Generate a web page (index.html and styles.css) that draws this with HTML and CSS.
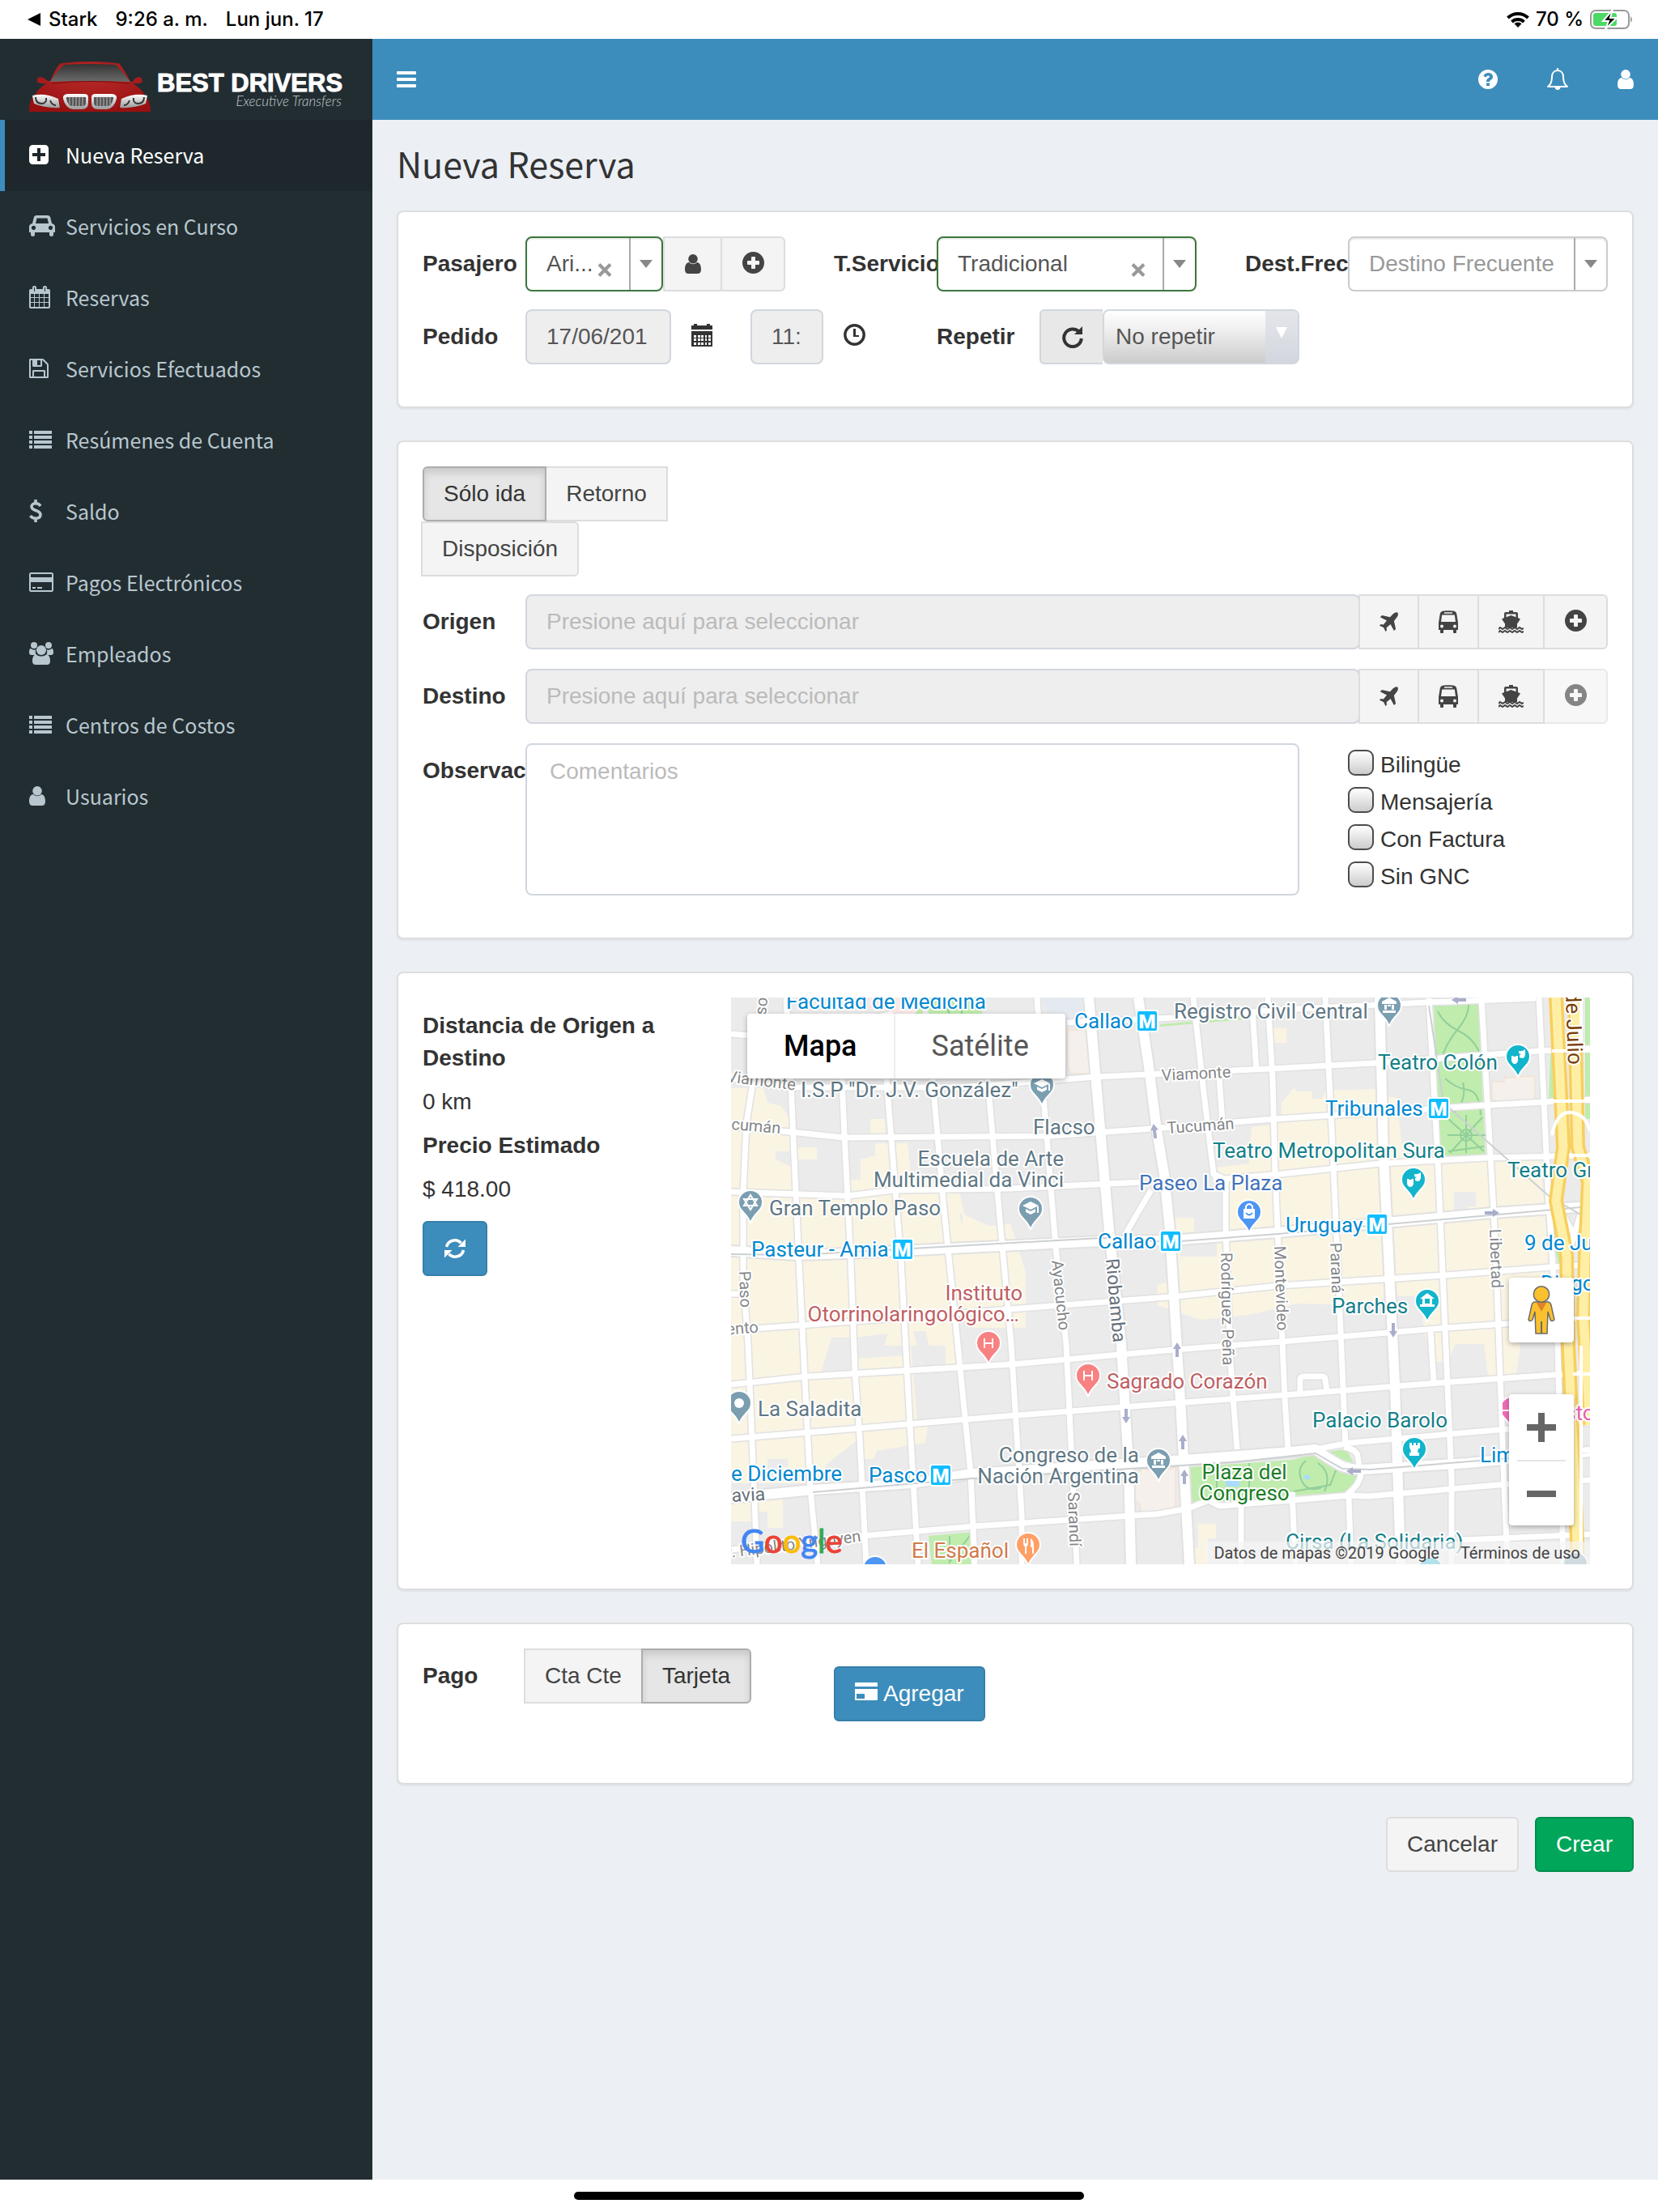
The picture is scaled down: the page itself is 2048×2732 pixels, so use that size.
FILE: index.html
```html
<!DOCTYPE html>
<html lang="es">
<head>
<meta charset="utf-8">
<meta name="viewport" content="width=device-width, initial-scale=1">
<title>Nueva Reserva | Best Drivers</title>
<link rel="stylesheet" href="styles.css">
</head>
<body>
<svg class="sprite" aria-hidden="true">
  <symbol id="i-user" viewBox="0 0 20 24"><circle cx="10" cy="5.8" r="5.8"/><path d="M5 10C1.500 10.500 0 14 0 19c0 3 1.700 5 4.200 5h11.600c2.500 0 4.200-2 4.200-5 0-5-1.500-8.500-5-9-2.800 3-7.200 3-10 0z"/></symbol>
  <symbol id="i-plus-square" viewBox="0 0 24 24"><path fill-rule="evenodd" d="M4.500 0h15A4.500 4.500 0 0 1 24 4.500v15a4.500 4.500 0 0 1-4.500 4.500h-15A4.500 4.500 0 0 1 0 19.500v-15A4.500 4.500 0 0 1 4.500 0zM10 4v6H4v4h6v6h4v-6h6v-4h-6V4z"/></symbol>
  <symbol id="i-car" viewBox="0 0 32 26"><path fill-rule="evenodd" d="M9 0h14c1.600 0 2.800 1 3.200 2.500L28 10c2.500.3 4 2 4 4.500V21h-2v2.500a2.500 2.500 0 0 1-5 0V21H7v2.500a2.500 2.500 0 0 1-5 0V21H0v-6.500C0 12 1.500 10.300 4 10l1.800-7.500C6.200 1 7.400 0 9 0zm.5 3.500L8 10h16l-1.500-6.500zM5.500 12.700a2.600 2.600 0 1 0 0 5.200 2.600 2.600 0 0 0 0-5.200zm21 0a2.600 2.600 0 1 0 0 5.200 2.600 2.600 0 0 0 0-5.200z"/></symbol>
  <symbol id="i-calendar" viewBox="0 0 26 28"><path fill-rule="evenodd" d="M2 4h2V2a2 2 0 0 1 2-2h1a2 2 0 0 1 2 2v2h8V2a2 2 0 0 1 2-2h1a2 2 0 0 1 2 2v2h2a2 2 0 0 1 2 2v20a2 2 0 0 1-2 2H2a2 2 0 0 1-2-2V6a2 2 0 0 1 2-2zM6 2v5h1V2zm13 0v5h1V2zM2 10v4h4v-4zm5 0v4h5v-4zm6 0v4h5v-4zm6 0v4h5v-4zM2 15v5h4v-5zm5 0v5h5v-5zm6 0v5h5v-5zm6 0v5h5v-5zM2 21v5h4v-5zm5 0v5h5v-5zm6 0v5h5v-5zm6 0v5h5v-5z"/></symbol>
  <symbol id="i-save" viewBox="0 0 24 24"><path fill-rule="evenodd" d="M1.500 0H16c1 0 1.800.3 2.500 1L23 5.500c.7.700 1 1.500 1 2.500v14.500c0 .9-.6 1.500-1.500 1.500h-21C.6 24 0 23.400 0 22.500v-21C0 .6.6 0 1.500 0zM2 2v20h2v-6.500c0-.9.600-1.500 1.500-1.500h13c.9 0 1.500.6 1.500 1.500V22h2V8c0-.5-.2-.8-.5-1.100L17 2.400c-.3-.3-.6-.4-1-.4v6.500c0 .9-.6 1.500-1.500 1.500h-9C4.600 10 4 9.400 4 8.500V2zm8 0v6h4V2zM6 16v6h12v-6z"/></symbol>
  <symbol id="i-list" viewBox="0 0 28 22"><path d="M0 0h4v4H0zM6 0h22v4H6zM0 6h4v4H0zM6 6h22v4H6zM0 12h4v4H0zM6 12h22v4H6zM0 18h4v4H0zM6 18h22v4H6z"/></symbol>
  <symbol id="i-dollar" viewBox="0 0 16 28"><path fill="none" stroke="currentColor" stroke-width="3.600" d="M14 8C12.500 5.500 10.500 4.800 8 4.800c-3 0-5 1.500-5 4 0 6 11 3.500 11 10 0 2.700-2.300 4.400-6 4.400-3 0-5-1-6.500-3.200M8 0v5M8 23v5"/></symbol>
  <symbol id="i-card" viewBox="0 0 30 24"><path fill-rule="evenodd" d="M2.500 0h25A2.500 2.500 0 0 1 30 2.500v19a2.500 2.500 0 0 1-2.500 2.500h-25A2.500 2.500 0 0 1 0 21.500v-19A2.500 2.500 0 0 1 2.500 0zM2 2v4h26V2zm0 10v10h26V12zm2 6h4v2H4zm6 0h6v2h-6z"/></symbol>
  <symbol id="i-users" viewBox="0 0 30 28"><circle cx="6" cy="4" r="4"/><circle cx="24" cy="4" r="4"/><circle cx="15" cy="10" r="6"/><path d="M2 8c2.500 2 5 2 6.500 1C7 12 8 14 9 16H3c-2 0-3-1-3-3 0-3 .6-5 2-5zM28 8c-2.500 2-5 2-6.500 1 1.500 3 .5 5-.5 7h6c2 0 3-1 3-3 0-3-.6-5-2-5zM9 15.500c3 2.800 9 2.800 12 0 3.500 0 5 3.500 5 8 0 3-1.500 4.500-4.200 4.500H8.200C5.500 28 4 26.500 4 23.500c0-4.500 1.500-8 5-8z"/></symbol>
  <symbol id="i-plus-circle" viewBox="0 0 27 27"><path fill-rule="evenodd" d="M13.500 0a13.500 13.500 0 1 0 0 27 13.500 13.500 0 1 0 0-27zM12 6h3q1 0 1 1v4h4q1 0 1 1v3q0 1-1 1h-4v4q0 1-1 1h-3q-1 0-1-1v-4H7q-1 0-1-1v-3q0-1 1-1h4V7q0-1 1-1z"/></symbol>
  <symbol id="i-calendar-solid" viewBox="0 0 26 28"><path fill-rule="evenodd" d="M0 2h3V0h4v2h12V0h4v2h3v5H0zM0 9h26v19H0zM3 14v3h3v-3zm5 0v3h3v-3zm4 0v3h3v-3zm5 0v3h2v-3zm4 0v3h3v-3zM3 18v3h3v-3zm5 0v3h3v-3zm4 0v3h3v-3zm5 0v3h2v-3zm4 0v3h3v-3zM3 23v3h3v-3zm5 0v3h3v-3zm4 0v3h3v-3zm5 0v3h2v-3zm4 0v3h3v-3z"/></symbol>
  <symbol id="i-clock" viewBox="0 0 27 27"><circle cx="13.500" cy="13.500" r="11.700" fill="none" stroke="currentColor" stroke-width="3.400"/><path d="M12 6h3v8h4v2h-7z"/></symbol>
  <symbol id="i-redo" viewBox="0 0 27 27"><path fill="none" stroke="currentColor" stroke-width="4" d="M22 7A10.800 10.800 0 1 0 24.800 15"/><path d="M26 0v10H16z"/></symbol>
  <symbol id="i-refresh" viewBox="0 0 26 26"><path fill="none" stroke="currentColor" stroke-width="3.600" d="M2.500 11A10.500 10.500 0 0 1 20.500 6.200M23.500 15A10.500 10.500 0 0 1 5.500 19.800"/><path d="M26 1.500V11h-9.500zM0 24.500V15h9.500z"/></symbol>
  <symbol id="i-plane" viewBox="0 0 23 24"><path d="M22.300.7C20.800-.6 18.300.8 16.500 2.600L13 6.200 3 4 .8 6.200 9 10.500l-4.200 5-3.300-.4L0 16.700 5 19l2.500 5 1.500-1.500-.4-3.200 5-4.300 4.300 8.100 2.200-2.100-2.200-10L21 7c1.500-1.700 2.700-5 1.300-6.300z"/></symbol>
  <symbol id="i-bus" viewBox="0 0 24 28"><path fill-rule="evenodd" d="M6 .6C9 0 15 0 18 .6c3 .5 4 2 4.400 4.400L24 15v9h-2v2.500a2 2 0 0 1-4 0V24H6v2.500a2 2 0 0 1-4 0V24H0v-9L1.600 5C2 2.600 3 1.100 6 .6zM7 2.200v1.600h10V2.200zM4.200 5.500L3 14h18l-1.200-8.500zM4 17.500a2 2 0 1 0 0 4 2 2 0 0 0 0-4zm16 0a2 2 0 1 0 0 4 2 2 0 0 0 0-4z"/></symbol>
  <symbol id="i-ship" viewBox="0 0 31 28"><path fill-rule="evenodd" d="M13 0h5v2h4q2 0 2 2v5l3 1.500-4 6V21H8v-4.500l-4-6L7 9V4q0-2 2-2h4zM9.500 4.500v3.700l6-2.200 6 2.200V4.500z"/><path fill="none" stroke="currentColor" stroke-width="2" d="M0 23l2-2 3 2 3-2 3 2 3-2 3 2 3-2 3 2 3-2 3 2 2-1M0 27l2-2 3 2 3-2 3 2 3-2 3 2 3-2 3 2 3-2 3 2 2-1"/></symbol>
  <symbol id="i-card-solid" viewBox="0 0 28 22"><path fill-rule="evenodd" d="M1 0h26q1 0 1 1v4H0V1q0-1 1-1zM0 8h28v13q0 1-1 1H1q-1 0-1-1zM2 14v6h10v-6z"/></symbol>
  <symbol id="i-help" viewBox="0 0 24 24"><path fill-rule="evenodd" d="M12 0a12 12 0 1 0 0 24 12 12 0 1 0 0-24zM10 16.500h4V20h-4zM6.500 8C7.500 5 9.500 4 12.200 4c3.200 0 5.800 2 5.800 4.800 0 2.200-1.200 3.200-2.600 4-1 .6-1.400 1-1.400 2.200h-4c0-2.600 1-3.800 2.800-4.800.8-.5 1.200-.8 1.200-1.400 0-.8-.8-1.300-1.800-1.300-1.200 0-1.800.6-2.700 1.900z"/></symbol>
  <symbol id="i-bell" viewBox="0 0 26 28"><path fill="none" stroke="currentColor" stroke-width="2" stroke-linejoin="round" d="M13 3c4.500 0 7 3.500 7 8 0 6 1.500 9.500 5 12H1c3.500-2.500 5-6 5-12 0-4.500 2.500-8 7-8zM13 0v3"/><path d="M9.500 23h7a3.500 4 0 0 1-7 0z"/></symbol>
  <symbol id="p-base" viewBox="-18 -18 36 48"><path d="M0 26C-3 14-15 11-15 0A15 15 0 1 1 15 0C15 11 3 14 0 26z" stroke="#fff" stroke-width="2"/></symbol>
</svg>

<div class="device-bar">
  <div class="device-left"><svg width="16" height="16" viewBox="0 0 16 16"><path d="M16 0v16L0 8z"/></svg><span>Stark</span><span class="device-gap">9:26 a. m.</span><span class="device-gap">Lun jun. 17</span></div>
  <div class="device-right">
    <svg width="28" height="20" viewBox="0 0 28 20"><g fill="none" stroke="#000" stroke-width="4"><path d="M1.500 8a18 18 0 0 1 25 0M6.500 13a11 11 0 0 1 15 0"/></g><path d="M14 20l-4.500-4.700a6.500 6.500 0 0 1 9 0z"/></svg>
    <span>70 %</span>
    <svg width="54" height="24" viewBox="0 0 54 24"><rect x="1" y="1" width="47" height="22" rx="6" fill="none" stroke="#999" stroke-width="2"/><path d="M50 8q4 4 0 8z" fill="#999"/><rect x="4" y="4" width="29" height="16" rx="3" fill="#4cd964"/><path d="M28 0L16 14h7l-4 10 14-14h-8z" fill="#000" stroke="#fff" stroke-width="2"/></svg>
  </div>
</div>

<div class="app">
  <aside class="sidebar">
    <a class="brand" href="#">
      <svg width="150" height="62" viewBox="0 0 150 62">
        <defs>
          <linearGradient id="glass" x1="0" y1="0" x2="0" y2="1"><stop offset="0" stop-color="#333"/><stop offset="1" stop-color="#6b6b6b"/></linearGradient>
          <radialGradient id="paint" cx=".5" cy=".3" r=".7"><stop offset="0" stop-color="#b82a2a"/><stop offset="1" stop-color="#991010"/></radialGradient>
          <linearGradient id="chrome" x1="0" y1="0" x2="0" y2="1"><stop offset="0" stop-color="#fff"/><stop offset="1" stop-color="#999"/></linearGradient>
        </defs>
        <path fill="url(#paint)" d="M41 2q34-4 68 0 3 0 5 4 8 12 11 19h3q2-6 9-6 4 2 2 7-3 2-11 1 10 6 14 13 8 8 8 22H0Q0 46 8 40q4-8 14-13-10 1-12-2-1-6 4-6 5 1 9 5h3Q30 14 36 5q2-3 5-3z"/>
        <path fill="url(#glass)" d="M43 4q32-2 64 0 9 9 18 21-50-2-99 0Q34 12 43 4z"/>
        <path fill="none" stroke="#7a0c0c" d="M28 27q48-5 96 0M40 60l-4-12M110 60l4-12"/>
        <path fill="url(#chrome)" d="M4 42q15-4 32 4l2 11Q20 58 6 52zM146 42q-15-4-32 4l-2 11q18 1 32-5z"/>
        <path fill="none" stroke="#333" stroke-width="2" d="M8 44q0 8 8 8 6-1 5-7M26 48q2 6 7 6M142 44q0 8-8 8-6-1-5-7M124 48q-2 6-7 6"/>
        <path fill="url(#chrome)" d="M42 43q2-3 6-3h20q5 0 5 4v7q0 8-8 8H54q-9-1-12-13zM108 43q-2-3-6-3H82q-5 0-5 4v7q0 8 8 8h11q9-1 12-13z"/>
        <path fill="#555" d="M46 44h24v7q0 4-5 4H54q-6 0-8-9zM104 44H80v7q0 4 5 4h11q6 0 8-9z"/>
        <path stroke="#bbb" d="M50 44v9M54 44v11M58 44v11M62 44v11M66 44v11M84 44v11M88 44v11M92 44v11M96 44v11M100 44v9"/>
      </svg>
      <span class="brand-text"><strong>BEST DRIVERS</strong><em>Executive Transfers</em></span>
    </a>
    <nav class="menu">
      <a class="menu-item active" href="#"><span class="menu-icon"><svg width="24" height="24"><use href="#i-plus-square"/></svg></span>Nueva Reserva</a>
      <a class="menu-item" href="#"><span class="menu-icon"><svg width="32" height="26"><use href="#i-car"/></svg></span>Servicios en Curso</a>
      <a class="menu-item" href="#"><span class="menu-icon"><svg width="26" height="28"><use href="#i-calendar"/></svg></span>Reservas</a>
      <a class="menu-item" href="#"><span class="menu-icon"><svg width="24" height="24"><use href="#i-save"/></svg></span>Servicios Efectuados</a>
      <a class="menu-item" href="#"><span class="menu-icon"><svg width="28" height="22"><use href="#i-list"/></svg></span>Resúmenes de Cuenta</a>
      <a class="menu-item" href="#"><span class="menu-icon"><svg width="16" height="28"><use href="#i-dollar"/></svg></span>Saldo</a>
      <a class="menu-item" href="#"><span class="menu-icon"><svg width="30" height="24"><use href="#i-card"/></svg></span>Pagos Electrónicos</a>
      <a class="menu-item" href="#"><span class="menu-icon"><svg width="30" height="28"><use href="#i-users"/></svg></span>Empleados</a>
      <a class="menu-item" href="#"><span class="menu-icon"><svg width="28" height="22"><use href="#i-list"/></svg></span>Centros de Costos</a>
      <a class="menu-item" href="#"><span class="menu-icon"><svg width="20" height="24"><use href="#i-user"/></svg></span>Usuarios</a>
    </nav>
  </aside>

  <div class="main">
    <header class="topbar">
      <button class="icon-btn" type="button" aria-label="Menú"><svg width="24" height="20" viewBox="0 0 24 20"><path d="M1 0h22q1 0 1 1v2q0 1-1 1H1Q0 4 0 3V1q0-1 1-1zM1 8h22q1 0 1 1v2q0 1-1 1H1q-1 0-1-1V9q0-1 1-1zM1 16h22q1 0 1 1v2q0 1-1 1H1q-1 0-1-1v-2q0-1 1-1z"/></svg></button>
      <div class="topbar-right">
        <button class="icon-btn" type="button" aria-label="Ayuda"><svg width="24" height="24"><use href="#i-help"/></svg></button>
        <button class="icon-btn" type="button" aria-label="Notificaciones"><svg width="26" height="28"><use href="#i-bell"/></svg></button>
        <button class="icon-btn" type="button" aria-label="Cuenta"><svg width="20" height="24"><use href="#i-user"/></svg></button>
      </div>
    </header>

    <main class="content">
      <h1>Nueva Reserva</h1>

      <section class="box">
        <div class="grid">
          <label class="lbl" for="pasajero">Pasajero</label>
          <div class="cell s3 group">
            <div class="combo valid"><select id="pasajero"><option>Ari...</option></select><button class="clear" type="button" aria-label="Quitar pasajero"><svg width="18" height="17" viewBox="0 0 18 17"><path d="M2 1.500l14 14M16 1.500l-14 14"/></svg></button><span class="caret"></span></div>
            <button class="btn addon b-user" type="button" aria-label="Ver pasajero"><svg width="20" height="24"><use href="#i-user"/></svg></button>
            <button class="btn addon b-plus last" type="button" aria-label="Agregar pasajero"><svg width="27" height="27"><use href="#i-plus-circle"/></svg></button>
          </div>
          <label class="lbl" for="servicio">T.Servicio</label>
          <div class="cell s3"><div class="combo valid"><select id="servicio"><option>Tradicional</option></select><button class="clear" type="button" aria-label="Quitar servicio"><svg width="18" height="17" viewBox="0 0 18 17"><path d="M2 1.500l14 14M16 1.500l-14 14"/></svg></button><span class="caret"></span></div></div>
          <label class="lbl" for="frecuente">Dest.Frec</label>
          <div class="cell s3"><div class="combo empty"><select id="frecuente"><option>Destino Frecuente</option></select><span class="caret"></span></div></div>
        </div>
        <div class="grid">
          <label class="lbl" for="fecha">Pedido</label>
          <div class="cell s4 when">
            <input class="field date" id="fecha" type="text" value="17/06/201" readonly>
            <svg class="when-icon" width="26" height="28"><use href="#i-calendar-solid"/></svg>
            <input class="field time" type="text" value="11:" aria-label="Hora" readonly>
            <svg class="when-icon" width="27" height="27"><use href="#i-clock"/></svg>
          </div>
          <label class="lbl" for="repetir">Repetir</label>
          <div class="cell s3 group">
            <span class="repeat-addon"><svg width="27" height="27"><use href="#i-redo"/></svg></span>
            <div class="repeat"><select id="repetir"><option>No repetir</option></select><span class="repeat-arrow"><svg width="14" height="14" viewBox="0 0 14 14"><path d="M0 0h14L7 14z"/></svg></span></div>
          </div>
        </div>
      </section>

      <section class="box trip-box">
        <div class="grid trip-kind">
          <div class="cell s3 toggles">
            <button class="btn toggle first on" type="button">Sólo ida</button>
            <button class="btn toggle" type="button">Retorno</button>
            <button class="btn toggle last" type="button">Disposición</button>
          </div>
        </div>
        <div class="grid">
          <label class="lbl" for="origen">Origen</label>
          <div class="cell s11 group">
            <input class="field" id="origen" type="text" placeholder="Presione aquí para seleccionar" readonly>
            <button class="btn addon b-plane" type="button" aria-label="Aeropuerto"><svg width="23" height="24"><use href="#i-plane"/></svg></button>
            <button class="btn addon b-bus" type="button" aria-label="Terminal"><svg width="24" height="28"><use href="#i-bus"/></svg></button>
            <button class="btn addon b-ship" type="button" aria-label="Puerto"><svg width="31" height="28"><use href="#i-ship"/></svg></button>
            <button class="btn addon b-plus last" type="button" aria-label="Agregar origen"><svg width="27" height="27"><use href="#i-plus-circle"/></svg></button>
          </div>
        </div>
        <div class="grid">
          <label class="lbl" for="destino">Destino</label>
          <div class="cell s11 group">
            <input class="field" id="destino" type="text" placeholder="Presione aquí para seleccionar" readonly>
            <button class="btn addon b-plane" type="button" aria-label="Aeropuerto"><svg width="23" height="24"><use href="#i-plane"/></svg></button>
            <button class="btn addon b-bus" type="button" aria-label="Terminal"><svg width="24" height="28"><use href="#i-bus"/></svg></button>
            <button class="btn addon b-ship" type="button" aria-label="Puerto"><svg width="31" height="28"><use href="#i-ship"/></svg></button>
            <button class="btn addon b-plus last" type="button" aria-label="Agregar destino" disabled><svg width="27" height="27"><use href="#i-plus-circle"/></svg></button>
          </div>
        </div>
        <div class="grid">
          <label class="lbl" for="obs">Observac</label>
          <div class="cell s8"><textarea class="notes" id="obs" placeholder="Comentarios"></textarea></div>
          <div class="cell s3 checks">
            <label><input type="checkbox">Bilingüe</label>
            <label><input type="checkbox">Mensajería</label>
            <label><input type="checkbox">Con Factura</label>
            <label><input type="checkbox">Sin GNC</label>
          </div>
        </div>
      </section>

      <section class="box map-box">
        <div class="grid">
          <div class="cell s3 estimate">
            <p><strong>Distancia de Origen a Destino</strong></p>
            <p>0 km</p>
            <p><strong>Precio Estimado</strong></p>
            <p>$ 418.00</p>
            <button class="btn primary refresh" type="button" aria-label="Recalcular"><svg width="26" height="26"><use href="#i-refresh"/></svg></button>
          </div>
          <div class="cell s9 map-cell">
            <div class="map">
<svg class="map-art" viewBox="0 0 1061 700" preserveAspectRatio="xMinYMin slice">
  <defs>
    <g id="roads" fill="none" stroke-linejoin="round">
      <path d="M28 98L19 155 15 241V345L21 428 24 501 29 621 32 700M68 0L74 108 80 241 84 328 94 528 98 608 107 700M137 101L140 168 148 328 153 461 159 545 167 700M192 101L198 175 210 325 221 528 231 700M249 101L262 251 280 428 296 588 301 700M317 101L330 251 346 428 359 638V700M378 0L387 135 401 308 414 428 427 700M571 0L584 118 596 218 611 225V288L617 451 625 558M644 15L649 90M603 98L607 155M663 0L669 101 672 215 684 495 688 558M693 611L697 700M734 0L743 185 756 481 759 555M763 618L766 700M862 1L873 201 890 595V700M927 1L944 301 954 578 959 700M998 0L1009 235 1021 428 1028 700M630 628V700M864 411L868 475M703 488V472Q703 468 708 468H730Q734 468 734 472L736 485"/>
      <path d="M0 45L60 50 200 20M415 31L547 25 680 15 860 6 994 1M0 100L73 111H280L451 98 665 88 795 81 998 66 1061 63M0 160L73 166 140 173 394 171 547 160 672 150 933 133 1061 126M0 240L144 245 201 238 344 236 508 228M596 225L680 218 802 205 933 198 1061 195M0 366H20M0 411L208 396 344 385 540 370 676 356 883 343 1013 333 1061 330M0 478L94 468 348 453 547 435 680 425 883 408 1061 396M0 545L290 521 547 501 684 491 887 475 1061 463M0 682L162 665 301 653 494 640 527 638 565 631 590 621 603 628 692 621 764 615 787 616 959 601 1061 596M722 558L764 550 959 533 1061 525M757 555Q772 558 774 566L778 590Q776 602 760 615M904 670L1061 663M519 238L501 268 487 293M1009 235L1045 300M1061 230L1030 330"/>
    </g>
    <g id="avenues" fill="none" stroke-linejoin="round">
      <path d="M442 0L458 185 467 288 482 428 491 578 494 700M503 0L515 78 526 165 535 218 542 288 556 515 566 700M801 0L806 195 820 478 827 700M0 313L80 318 144 316 458 301 542 300 676 290 940 266 1061 258M0 618L101 608 223 600 298 588 561 571 692 561 722 558Q735 568 753 578 765 583 780 583L910 575 1061 561"/>
    </g>
    <g id="julio" fill="none"><path d="M1019 0L1024 101 1028 185 1019 251 1032 318 1034 428 1042 595 1046 700M1042 0L1044 101 1046 185 1059 228 1055 318 1053 395 1061 528"/></g>
    <g id="cap" fill="#fff"><path d="M-10-4L0-9 10-4 0 1zM-6 0L0 3 6 0V4L0 7-6 4zM8-3h2v8H8z"/></g>
    <g id="bank" fill="#fff"><path d="M-9-5L0-10 9-5V-2H-9zM-6-1h3v6h-3zM3-1h3v6H3zM-2-1h4v2h-4zM-8 6H8v3H-8z"/></g>
    <g id="masks" fill="#fff"><path d="M-8-1h2l1 1h2l1-1h2v6q-1 4-4 4t-4-4zM1-7q4 1 8-2v7q-1 4-4 4l-3-1v-3l2-1-3-1z"/></g>
    <g id="metro"><rect width="26" height="26" rx="3" fill="#12bdff" stroke="#fff" stroke-width="2"/><text x="13" y="22" class="metro-m">M</text></g>
    <path id="arrow" d="M0-9L5-1H2V9H-2V-1H-5z"/>
  </defs>
  <rect width="1061" height="700" fill="#ebebeb"/>
  <g fill="#faf4e3">
    <path d="M0 112H40L45 130 62 134 73 150 75 190H55L55 200 76 210 80 240 144 245 146 225 160 225 160 200 178 195V180H218L222 215 240 220 262 240 283 243 288 268 318 282 345 280 352 300 364 340V408H300V395H273L290 455H235V430H222L230 525 243 530 240 550 180 560 176 570 160 570 158 545 120 575 100 600H0z"/>
    <path d="M172 150h18v19h-18zM82 185h24v15H82zM0 620h64v35H45v-20H25v12H0z"/>
    <path d="M598 210L640 205 643 160 665 158 680 151V130L695 112 700 116H718V125H730L735 115 795 113 800 120 822 124 830 195 1000 198 1010 330 1016 400H965L975 430 970 465 935 468 930 428 895 428 885 450H868L855 410V370L820 368 780 380 700 378 640 392 580 398 527 380V355L545 350 550 300 610 290V222zM669 38h17v18h-17zM547 272h25v28h-25zM577 650h22v18h-10v32h-30v-20h18z"/>
  </g>
  <g fill="#ebebeb"><path d="M90 225l10-15h40v24H90zM124 420h30l40-5-5 15h22l3 12-60 4-5 18h-38zM225 412h15l5 18h20v25h-28zM45 570h25v10H60v15H45zM286 285v-18h-4zM893 240h27v18h-10v10h-17zM555 300h30v-35h15v55h-45z"/></g>
  <g fill="#c0ecae">
    <path d="M868 10L923 8 932 195 877 195zM244 0h64l2 20h-66zM225 20l12-18v18zM244 665l56-5v40h-52zM567 580l127-9 28-8 27 17 25 8-10 23-69 4-92 8-34 3zM737 561l23-3 10 18h-17zM1012 70h8v60h-10zM1010 270h10l10 60h-8zM1055 0h6v150h-6zM1024 430h8v70h-6zM1056 340h5v30z"/>
    <path d="M530 33l140-12v3l-140 12z"/>
  </g>
  <g fill="#fae9e7"><path d="M170 0h74l-20 24-54-10z"/></g>
  <path d="M385 0h48v28h-40z" fill="#e4eaef"/>
  <g fill="#f5f0eb" stroke="#f3ddc8"><path d="M415 40h28v54h-24l-3-8zM940 104h15v-5l38-2v30l-38 3-15-4zM497 592l12-10 18 4 22-6v58l-20 4-10-4-12 4-2-16-8-8z"/></g>
  <g fill="#abdcff"><path d="M611 594h17v10h-17zM708 590h7v5h-7z"/></g>
  <g fill="none" stroke="#93cf9a" stroke-width="2"><path d="M873 17Q880 32 900 42T927 75M911 8Q912 22 897 40T877 78M882 100Q895 112 910 114T926 145M904 105Q908 120 900 135L893 142M886 150L930 190M928 148L888 192M908 145V192M885 170H932M886 190L930 184M285 0v20M262 5l8 15M600 582v40M640 575v45M710 572q-12 10-5 25t25 8M725 575q18 12 8 35M695 610l45-8 8-20M270 665v32l28-36"/><circle cx="908" cy="170" r="7"/></g>

  <use href="#roads" stroke="#e1e1e1" stroke-width="10"/>
  <use href="#avenues" stroke="#e1e1e1" stroke-width="16"/>
  <use href="#roads" stroke="#fff" stroke-width="7"/>
  <use href="#avenues" stroke="#fff" stroke-width="12"/>
  <path d="M0 317L80 318 330 304 458 297 542 302 676 292 1061 258M101 611L298 594 620 574 722 563 755 582 790 583 1061 561M862 10L880 130 1010 245 1061 275" fill="none" stroke="#ccd0d3" stroke-width="2"/>
  <use href="#julio" stroke="#f8cf5e" stroke-width="18"/>
  <use href="#julio" stroke="#ffefa6" stroke-width="11"/>
  <g fill="none" stroke="#fff" stroke-width="4"><path d="M1014 170Q1020 140 1038 142T1061 165M1050 430V700M1050 0V60M1014 66h47M1014 128h47M1035 195h26M1035 396h26M1040 465h21M1050 560h11"/></g>
  <g fill="#a9aecb">
    <use href="#arrow" transform="translate(523 165) rotate(-8)"/><use href="#arrow" transform="translate(488 517) rotate(180)"/><use href="#arrow" transform="translate(551 435)"/><use href="#arrow" transform="translate(558 549)"/><use href="#arrow" transform="translate(560 592)"/><use href="#arrow" transform="translate(818 411) rotate(180)"/><use href="#arrow" transform="translate(899 3) rotate(-90)"/><use href="#arrow" transform="translate(940 266) rotate(90)"/><use href="#arrow" transform="translate(769 585) rotate(-90)"/>
  </g>

  <g class="street">
    <text transform="translate(-6 104) rotate(7)">Viamonte</text>
    <text transform="translate(-22 161) rotate(5)">Tucumán</text>
    <text transform="translate(532 103) rotate(-3)">Viamonte</text>
    <text transform="translate(539 168) rotate(-4)">Tucumán</text>
    <text transform="translate(-57 420) rotate(-4)">Sarmiento</text>
    <text transform="translate(-20 694) rotate(-7)">Av. Hipólito Yrigoyen</text>
    <text transform="translate(43 22) rotate(-84)">so</text>
    <text transform="translate(10 338) rotate(88)">Paso</text>
    <text transform="translate(396 325) rotate(84)">Ayacucho</text>
    <text transform="translate(605 315) rotate(89)">Rodríguez Peña</text>
    <text transform="translate(671 307) rotate(88)">Montevideo</text>
    <text transform="translate(740 303) rotate(88)">Paraná</text>
    <text transform="translate(937 286) rotate(88)">Libertad</text>
    <text transform="translate(416 611) rotate(88)">Sarandí</text>
  </g>
  <g class="street big">
    <text transform="translate(463 323) rotate(85)">Riobamba</text>
    <text transform="translate(1 623) rotate(-3)">avia</text>
  </g>
  <text class="highway" text-anchor="end" transform="translate(1034 83) rotate(88)">9 de Julio</text>

  <g class="place">
    <g fill="#0288d1">
      <text x="68" y="14">Facultad de Medicina</text><text x="424" y="38">Callao</text><text x="453" y="310">Callao</text><text x="25" y="320">Pasteur - Amia</text><text x="734" y="146">Tribunales</text><text x="685" y="290">Uruguay</text><text x="980" y="312">9 de Julio</text><text x="1000" y="362">Diego</text><text x="0" y="597">e Diciembre</text><text x="170" y="599">Pasco</text><text x="925" y="574">Lima</text>
    </g>
    <g fill="#5f7885">
      <text x="86" y="123">I.S.P "Dr. J.V. González"</text><text x="373" y="169">Flacso</text><text x="411" y="208" text-anchor="end">Escuela de Arte</text><text x="411" y="234" text-anchor="end">Multimedial da Vinci</text><text x="47" y="269">Gran Templo Paso</text><text x="547" y="26">Registro Civil Central</text><text x="33" y="517">La Saladita</text><text x="504" y="574" text-anchor="end">Congreso de la</text><text x="504" y="600" text-anchor="end">Nación Argentina</text>
    </g>
    <g fill="#14808a">
      <text x="799" y="89">Teatro Colón</text><text x="595" y="198">Teatro Metropolitan Sura</text><text x="959" y="222">Teatro Gran</text><text x="742" y="390">Parches</text><text x="718" y="531">Palacio Barolo</text><text x="685" y="681">Cirsa (La Solidaria)</text>
    </g>
    <g fill="#bf5f63"><text x="360" y="374" text-anchor="end">Instituto</text><text x="356" y="400" text-anchor="end">Otorrinolaringológico…</text><text x="464" y="483">Sagrado Corazón</text></g>
    <g fill="#1b7d27"><text x="634" y="595" text-anchor="middle">Plaza del</text><text x="634" y="621" text-anchor="middle">Congreso</text></g>
    <text x="504" y="238" fill="#4273ba">Paseo La Plaza</text><text x="223" y="692" fill="#d27a4b">El Español</text><text x="1030" y="522" fill="#e85cae">sto</text>
  </g>
  <use href="#metro" x="501" y="16"/><use href="#metro" x="530" y="288"/><use href="#metro" x="199" y="298"/><use href="#metro" x="861" y="124"/><use href="#metro" x="785" y="267"/><use href="#metro" x="246" y="577"/>

  <g fill="#7b9eb0">
    <use href="#p-base" x="6" y="235" width="36" height="48"/><use href="#p-base" x="366" y="90" width="36" height="48"/><use href="#p-base" x="352" y="243" width="36" height="48"/><use href="#p-base" x="795" y="-8" width="36" height="48"/><use href="#p-base" x="-8" y="483" width="36" height="48"/><use href="#p-base" x="510" y="554" width="36" height="48"/><use href="#p-base" x="1025" y="682" width="36" height="48"/>
  </g>
  <g fill="#12b5cb"><use href="#p-base" x="954" y="55" width="36" height="48"/><use href="#p-base" x="825" y="207" width="36" height="48"/><use href="#p-base" x="842" y="357" width="36" height="48"/><use href="#p-base" x="826" y="540" width="36" height="48"/><use href="#p-base" x="846" y="688" width="36" height="48"/></g>
  <g fill="#4d96f4"><use href="#p-base" x="622" y="247" width="36" height="48"/><use href="#p-base" x="160" y="687" width="36" height="48"/></g>
  <g fill="#f88181"><use href="#p-base" x="300" y="409" width="36" height="48"/><use href="#p-base" x="423" y="449" width="36" height="48"/></g>
  <use href="#p-base" x="349" y="658" width="36" height="48" fill="#ff9f66"/><use href="#p-base" x="947" y="490" width="36" height="48" fill="#f06db7"/>
  <g fill="none" stroke="#fff" stroke-width="2"><path d="M24 244l8 13H16zM24 262l8-13H16zM313 421v12M323 421v12M313 427h10M436 461v12M446 461v12M436 467h10"/><path d="M636 262v-4q4-6 8 0v4M952 502v14M952 510h12"/></g>
  <path fill="#fff" d="M633 261h14v12h-14zM361 668h2v6h2v-6h2v6q0 3-2 4v9h-2v-9q-2-1-2-4zM370 668q4 2 4 10v9h-2v-8h-2z"/>
  <circle cx="10" cy="501" r="6" fill="#fff"/>
  <path d="M636 266q4 5 8 0" fill="none" stroke="#4d96f4" stroke-width="2"/>
  <use href="#cap" x="384" y="110"/><use href="#cap" x="370" y="261"/><use href="#bank" x="813" y="10"/><use href="#bank" x="528" y="572"/><use href="#masks" x="972" y="73"/><use href="#masks" x="843" y="225"/>
  <path fill="#fff" fill-rule="evenodd" d="M860 365l9 7h-3v7h3v3h-18v-3h3v-7h-3zM857 372v6h6v-6zM838 550h3v3h2v-3h3v3h2v-3h3v7h-2l-1 5h2v4h-12v-4h2l-1-5h-1z"/>
</svg>
              <div class="map-type"><button class="current" type="button">Mapa</button><button type="button">Satélite</button></div>
              <button class="pegman" type="button" aria-label="Street View"><svg width="34" height="60" viewBox="0 0 34 60"><g fill="#fbc02d" stroke="#6b6b6b" stroke-width="1.500"><path d="M9 20h16q3 0 4 4l4 18q-3 3-5 0l-3-10-1 27H10L9 32 6 42q-3 3-5 0l4-18q1-4 4-4z"/><circle cx="17" cy="10.500" r="9.700"/></g><path d="M11 21h12l-6 11z" fill="#e0812c"/><path d="M17 44v15" stroke="#6b6b6b" stroke-width="2"/></svg></button>
              <div class="zoom"><button type="button" aria-label="Acercar"><svg width="36" height="36" viewBox="0 0 36 36"><path d="M14 0h8v14h14v8H22v14h-8V22H0v-8h14z"/></svg></button><button type="button" aria-label="Alejar"><svg width="36" height="8" viewBox="0 0 36 8"><path d="M0 0h36v8H0z"/></svg></button></div>
              <a class="google" href="#" aria-label="Google"><span class="g-b">G</span><span class="g-r">o</span><span class="g-y">o</span><span class="g-b">g</span><span class="g-g">l</span><span class="g-r">e</span></a>
              <div class="map-legal"><span>Datos de mapas ©2019 Google</span><a href="#">Términos de uso</a></div>
            </div>
          </div>
        </div>
      </section>

      <section class="box pay-box">
        <div class="grid">
          <span class="lbl">Pago</span>
          <div class="cell s3 toggles">
            <button class="btn toggle" type="button">Cta Cte</button>
            <button class="btn toggle last on" type="button">Tarjeta</button>
          </div>
          <div class="cell s3"><button class="btn primary add-card" type="button"><svg width="28" height="22"><use href="#i-card-solid"/></svg>Agregar</button></div>
        </div>
      </section>

      <div class="actions">
        <button class="btn cancel" type="button">Cancelar</button>
        <button class="btn create" type="button">Crear</button>
      </div>
    </main>
  </div>
</div>
<div class="home-area"><div class="home-indicator"></div></div>
</body>
</html>
```

FILE: styles.css
```css
*, *::before, *::after { box-sizing: border-box; }

body {
  margin: 0;
  min-height: 100vh;
  display: flex;
  flex-direction: column;
  background: #fff;
  color: #333;
  font: 28px/40px "Liberation Sans", Arial, sans-serif;
}

button, input, select, textarea { font: inherit; color: inherit; margin: 0; }
button { cursor: pointer; }
a { color: inherit; text-decoration: none; }
p, h1 { margin: 0; }
svg { fill: currentColor; display: block; flex: none; }
.sprite { position: absolute; width: 0; height: 0; }

/* Device status bar */
.device-bar {
  height: 48px;
  padding: 0 30px 0 34px;
  display: flex;
  align-items: center;
  justify-content: space-between;
  color: #000;
  font: 500 24px/48px Inter, sans-serif;
}
.device-left { display: flex; align-items: center; gap: 10px; }
.device-right { display: flex; align-items: center; gap: 8px; }
.device-gap { margin-left: 12px; }

/* Layout */
.app { flex: 1; display: grid; grid-template-columns: 460px minmax(0, 1fr); }
.sidebar { background: #222d32; color: #b8c7ce; }
.main { background: #ecf0f5; }

.brand { height: 100px; padding: 28px 0 0 36px; display: flex; gap: 8px; color: #fff; }
.brand-text { display: flex; flex-direction: column; width: 228px; }
.brand-text strong { font-size: 31px; line-height: 28px; margin-top: 13px; white-space: nowrap; -webkit-text-stroke: 1px; }
.brand-text em { font: italic 300 17px/16px Lato, sans-serif; color: #c5cacc; text-align: right; }

.menu-item {
  height: 88px;
  padding: 0 0 2px 30px;
  border-left: 6px solid transparent;
  display: flex;
  align-items: center;
  font: 25px/40px "Noto Sans CJK JP", "Noto Sans", sans-serif;
}
.menu-item.active { background: #1e282c; border-color: #3c8dbc; color: #fff; }
.menu-icon { width: 45px; }

.topbar {
  height: 100px;
  padding: 0 30px;
  display: flex;
  align-items: center;
  justify-content: space-between;
  background: #3c8dbc;
  color: #fff;
}
.topbar-right { display: flex; gap: 61px; align-items: center; }
.icon-btn { padding: 0; border: 0; background: none; }

.content { padding: 0 30px 40px; }
h1 { padding: 23px 0 29px; font: 400 43px/60px "Noto Sans CJK JP", "Noto Sans", sans-serif; }

.box {
  margin-bottom: 40px;
  padding: 30px 30px 52px;
  display: flex;
  flex-direction: column;
  gap: 22px;
  background: #fff;
  border: 2px solid #ddd;
  border-radius: 8px;
  box-shadow: 0 2px 2px rgba(0, 0, 0, .05);
}
.trip-box { gap: 24px; }
.trip-kind { margin-bottom: -2px; }
.map-box { padding-bottom: 30px; }
.pay-box { padding-bottom: 76px; }

/* Twelve columns; each cell keeps its gutter on the right */
.grid { display: grid; grid-template-columns: repeat(12, minmax(0, 1fr)); margin-right: -60px; }
.cell { padding-right: 60px; min-width: 0; }
.s3 { grid-column: span 3; }
.s4 { grid-column: span 4; padding-right: 0; }
.s8 { grid-column: span 8; }
.s9 { grid-column: span 9; }
.s11 { grid-column: span 11; }
.lbl { font-weight: 700; line-height: 68px; height: 68px; white-space: nowrap; }
.group { display: flex; }

.field {
  height: 68px;
  min-width: 0;
  flex: 1;
  padding: 0 24px;
  border: 2px solid #d2d6de;
  border-radius: 8px;
  background: #eee;
  color: #555;
}
::placeholder { color: #bbb; opacity: 1; }
.when { display: flex; align-items: center; }
.date { flex: 0 0 180px; }
.time { flex: 0 0 90px; padding-right: 20px; }
.when-icon { margin-left: 25px; margin-bottom: 5px; }
.when-icon + .time { margin-left: 47px; }

.combo {
  height: 68px;
  flex: 1;
  min-width: 0;
  display: flex;
  border: 2px solid #ccc;
  border-radius: 8px;
  background: #fff;
  box-shadow: inset 0 2px 2px rgba(0, 0, 0, .08);
  color: #555;
}
.combo.valid { border-color: #3c763d; }
.combo.empty { color: #999; }
.combo select, .repeat select { appearance: none; border: 0; background: none; flex: 1; min-width: 0; }
.combo select { padding: 0 0 0 24px; }
.clear { padding: 14px 21px 0 0; border: 0; background: none; display: flex; align-items: center; }
.clear svg { fill: none; stroke: #999; stroke-width: 4; }
.caret { width: 40px; border-left: 2px solid #aaa; display: flex; align-items: center; justify-content: center; }
.caret::before { content: ""; border: 8px solid transparent; border-top: 10px solid #888; border-bottom: 0; }

.btn {
  height: 68px;
  padding: 0 24px;
  display: inline-flex;
  align-items: center;
  justify-content: center;
  border: 2px solid #ddd;
  border-radius: 6px;
  background: #f4f4f4;
  color: #444;
}
.addon { border-radius: 0; margin-left: -2px; padding: 0; flex: none; }
.btn.last { border-radius: 0 6px 6px 0; }
.btn:disabled { opacity: .65; }
.b-user { width: 73px; margin-left: 0; }
.b-plane { width: 75px; }
.b-bus { width: 76px; }
.b-ship { width: 83px; }
.b-plus { width: 80px; }
.b-plus svg { margin-bottom: 4px; }

.repeat-addon {
  width: 78px;
  height: 68px;
  display: flex;
  align-items: center;
  justify-content: center;
  border: 2px solid #d2d6de;
  border-right: 0;
  border-radius: 6px 0 0 6px;
  background: #e8e8e8;
}
.repeat {
  flex: 1;
  height: 68px;
  display: flex;
  border: 2px solid #d2d6de;
  border-radius: 8px;
  background: linear-gradient(#fff, #f0f0f0 35%, #ccc);
  color: #555;
  overflow: hidden;
}
.repeat select { padding: 0 0 0 14px; }
.repeat-arrow { width: 40px; padding: 20px 0 0 13px; background: linear-gradient(#e4e6eb, #d2d6de); color: #fff; }

.toggles { display: flex; flex-wrap: wrap; }
.toggle { border-radius: 0; margin-left: -2px; }
.toggle.first { border-radius: 6px 0 0 6px; margin-left: 0; }
.toggle.on {
  background: #e6e6e6;
  border-color: #adadad;
  color: #333;
  box-shadow: inset 0 6px 10px rgba(0, 0, 0, .125);
  z-index: 1;
}

.notes {
  display: block;
  width: 100%;
  height: 188px;
  padding: 13px 28px;
  border: 2px solid #d2d6de;
  border-radius: 8px;
  resize: none;
}
.checks { padding-top: 4px; }
.checks label { display: flex; gap: 8px; line-height: 46px; }
.checks input {
  appearance: none;
  width: 32px;
  height: 32px;
  margin: 4px 0 0;
  border: 2px solid #4c4c4c;
  border-radius: 9px;
  background: linear-gradient(#fff, #ccc);
}

.estimate { padding-top: 15px; }
.estimate p { margin-bottom: 14px; }
.primary { background: #3c8dbc; border-color: #367fa9; color: #fff; }
.refresh { width: 80px; margin-top: 5px; }
.add-card { gap: 7px; margin-top: 22px; }
.add-card svg { margin-bottom: 6px; }

/* Map */
.map-cell { padding-right: 82px; }
.map { position: relative; height: 700px; overflow: hidden; font-family: Roboto, sans-serif; }
.map-art { width: 100%; height: 100%; }
.map-art text { paint-order: stroke; stroke: #fff; stroke-width: 4px; stroke-linejoin: round; }
.place { font-size: 26px; }
.street { font-size: 20px; fill: #858789; }
.street.big { font-size: 23px; fill: #667079; }
.highway { font-size: 26px; fill: #7a3e06; }
.map-art .metro-m { font-size: 24px; font-weight: 900; fill: #fff; text-anchor: middle; stroke: none; }

.map-type, .pegman, .zoom { position: absolute; background: #fff; border-radius: 4px; box-shadow: 0 2px 6px rgba(0, 0, 0, .3); }
.map-type { left: 20px; top: 20px; height: 80px; display: flex; }
.map-type button { border: 0; background: none; padding: 0 45px; font-size: 36px; color: #565656; }
.map-type button + button { border-left: 2px solid #eee; }
.map-type .current { color: #000; font-weight: 500; }
.pegman { right: 20px; bottom: 274px; width: 80px; height: 80px; padding: 0; border: 0; display: flex; align-items: center; justify-content: center; }
.zoom { right: 20px; bottom: 48px; width: 80px; padding: 0 10px; color: #666; }
.zoom button { width: 60px; height: 81px; padding: 0; border: 0; background: none; display: flex; align-items: center; justify-content: center; }
.zoom button + button { border-top: 2px solid #e6e6e6; }
.google { position: absolute; left: 12px; bottom: 6px; font: 40px/46px Lato, sans-serif; -webkit-text-stroke: 1px; }
.g-b { color: #4285f4; }
.g-r { color: #ea4335; }
.g-y { color: #fbbc05; }
.g-g { color: #34a853; }
.map-legal {
  position: absolute;
  right: 0;
  bottom: 0;
  padding: 0 12px 0 10px;
  display: flex;
  gap: 26px;
  background: rgba(245, 245, 245, .7);
  color: #444;
  font-size: 20px;
  line-height: 28px;
}

.actions { display: flex; justify-content: flex-end; gap: 20px; }
.create { background: #00a65a; border-color: #008d4c; color: #fff; }

.home-area { height: 40px; display: flex; justify-content: center; padding-top: 15px; }
.home-indicator { width: 630px; height: 10px; border-radius: 5px; background: #000; }
```
